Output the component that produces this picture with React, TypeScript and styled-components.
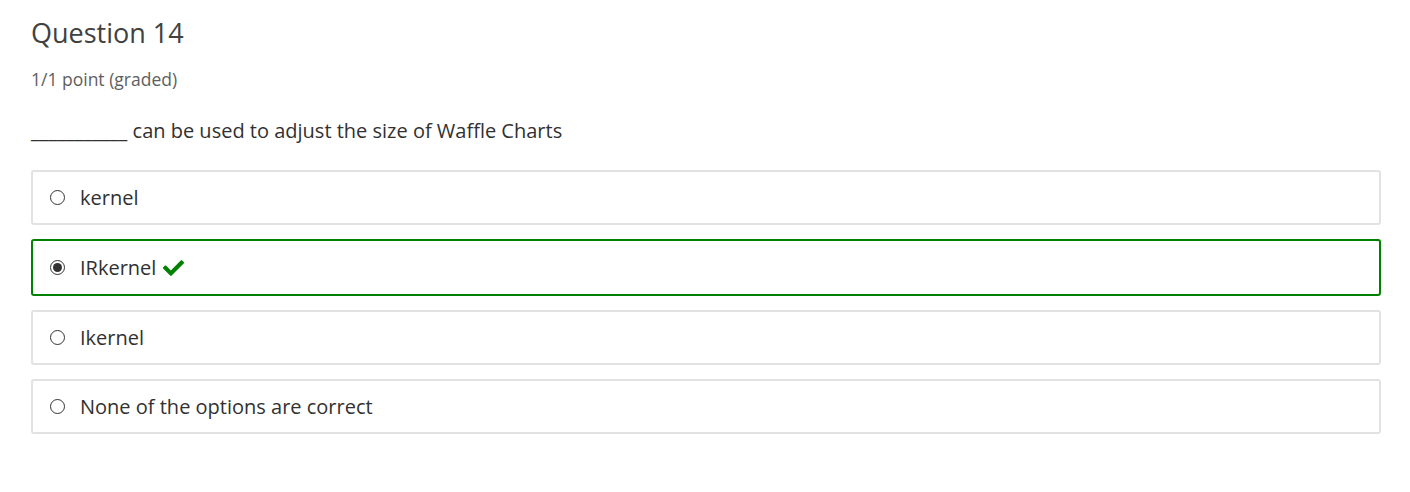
import React from "react";
import styled, { createGlobalStyle } from "styled-components";

const Global = createGlobalStyle`
  html, body { margin: 0; padding: 0; background: #fff; }
  body { font-family: "Open Sans", "Noto Sans", sans-serif; }
`;

const Page = styled.div`
  padding: 16px 29px 0 31px;
`;

const Title = styled.h3`
  margin: 0;
  font-size: 27px;
  line-height: 34px;
  font-weight: 400;
  color: #414141;
`;

const Points = styled.div`
  margin-top: 17px;
  font-size: 17.5px;
  line-height: 24px;
  color: #5e5e5e;
`;

const Prompt = styled.p`
  margin: 27px 0 0;
  font-size: 20px;
  line-height: 26px;
  color: #313131;
`;

const Options = styled.div`
  margin-top: 26px;
  display: flex;
  flex-direction: column;
  gap: 14px;
`;

const Option = styled.label<{ $correct?: boolean }>`
  display: flex;
  align-items: center;
  gap: 15px;
  padding: ${(p) => (p.$correct ? "14px 17px" : "13px 17px")};
  border: 2px solid ${(p) => (p.$correct ? "#008100" : "#e2e2e2")};
  border-radius: 3px;
  font-size: 20px;
  line-height: 25px;
  color: #313131;
`;

const Radio = styled.span<{ $checked?: boolean }>`
  width: 15px;
  height: 15px;
  box-sizing: border-box;
  border-radius: 50%;
  border: 1px solid #333;
  background: #fff;
  display: flex;
  align-items: center;
  justify-content: center;
  flex: none;
  &::after {
    content: "";
    display: ${(p) => (p.$checked ? "block" : "none")};
    width: 9px;
    height: 9px;
    border-radius: 50%;
    background: #333;
  }
`;

const Check = styled.svg`
  width: 21px;
  height: 17px;
  margin-left: -8px;
  color: #008100;
`;

const choices = [
  { text: "kernel" },
  { text: "IRkernel", correct: true },
  { text: "Ikernel" },
  { text: "None of the options are correct" },
];

export default function App() {
  return (
    <>
      <Global />
      <Page>
        <Title>Question 14</Title>
        <Points>1/1 point (graded)</Points>
        <Prompt>___________ can be used to adjust the size of Waffle Charts</Prompt>
        <Options>
          {choices.map((c) => (
            <Option key={c.text} $correct={c.correct}>
              <Radio $checked={c.correct} />
              <span>{c.text}</span>
              {c.correct && (
                <Check viewBox="0 0 512 410" aria-hidden>
                  <path
                    fill="currentColor"
                    d="M173.9 402L7.5 235.6c-10-10-10-26.2 0-36.2l36.2-36.2c10-10 26.2-10 36.2 0L192 275.2 432.1 35.1c10-10 26.2-10 36.2 0l36.2 36.2c10 10 10 26.2 0 36.2L210.1 402c-10 10-26.2 10-36.2 0z"
                  />
                </Check>
              )}
            </Option>
          ))}
        </Options>
      </Page>
    </>
  );
}
